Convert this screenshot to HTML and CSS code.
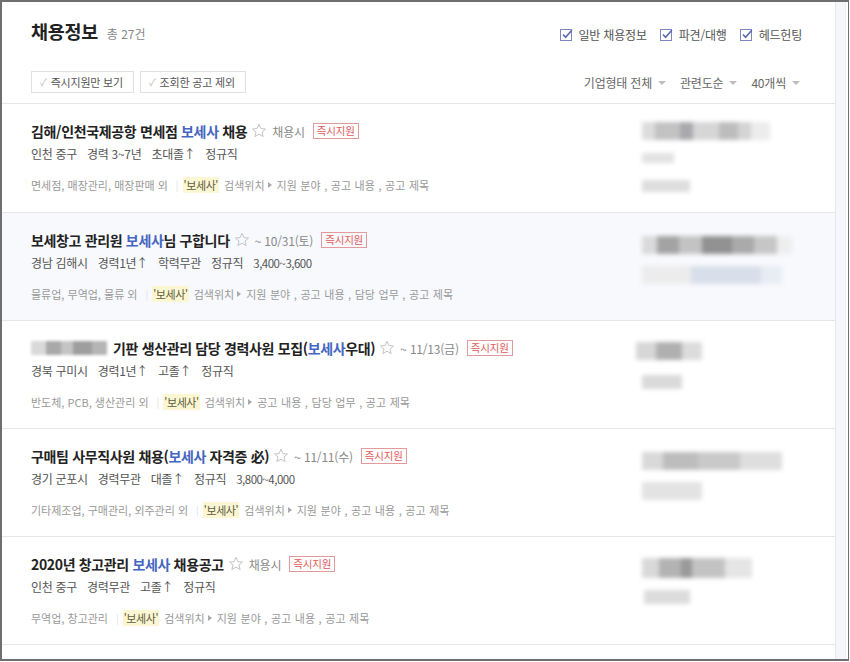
FILE: index.html
```html
<!DOCTYPE html>
<html lang="ko">
<head>
<meta charset="utf-8">
<title>채용정보</title>
<link rel="stylesheet" href="styles.css">
</head>
<body>
<div class="frame">
  <div class="main">
    <div class="head">
      <div class="head-top">
        <h1 class="h-title">채용정보 <span class="count">총 27건</span></h1>
        <div class="types">
          <label class="chk"><svg viewBox="0 0 13 13" width="13" height="13"><rect x="0.5" y="1.5" width="11" height="11" fill="#fff" stroke="#7d87bf"/><path d="M3 6.5 L5.6 9.2 L11.8 2.2" fill="none" stroke="#5a67ad" stroke-width="1.6"/></svg>일반 채용정보</label>
          <label class="chk"><svg viewBox="0 0 13 13" width="13" height="13"><rect x="0.5" y="1.5" width="11" height="11" fill="#fff" stroke="#7d87bf"/><path d="M3 6.5 L5.6 9.2 L11.8 2.2" fill="none" stroke="#5a67ad" stroke-width="1.6"/></svg>파견/대행</label>
          <label class="chk"><svg viewBox="0 0 13 13" width="13" height="13"><rect x="0.5" y="1.5" width="11" height="11" fill="#fff" stroke="#7d87bf"/><path d="M3 6.5 L5.6 9.2 L11.8 2.2" fill="none" stroke="#5a67ad" stroke-width="1.6"/></svg>헤드헌팅</label>
        </div>
      </div>
      <div class="head-filter">
        <div class="btns">
          <button class="fbtn"><span class="tick">✓</span>즉시지원만 보기</button>
          <button class="fbtn"><span class="tick">✓</span>조회한 공고 제외</button>
        </div>
        <div class="sorts">
          <span class="sort">기업형태 전체<i class="caret"></i></span>
          <span class="sort">관련도순<i class="caret"></i></span>
          <span class="sort">40개씩<i class="caret"></i></span>
        </div>
      </div>
    </div>

    <div class="list">
      <div class="row">
        <div class="info">
          <div class="title"><span class="t">김해/인천국제공항 면세점 <em>보세사</em> 채용</span><svg class="star" viewBox="0 0 16 16" width="16" height="16"><path d="M8 1.3 L9.9 5.6 L14.5 6 L11 9.1 L12.1 13.6 L8 11.2 L3.9 13.6 L5 9.1 L1.5 6 L6.1 5.6 Z" fill="none" stroke="#c4c4c4" stroke-width="1"/></svg><span class="due">채용시</span><span class="badge">즉시지원</span></div>
          <div class="meta"><span>인천 중구</span><span>경력 3~7년</span><span>초대졸↑</span><span>정규직</span></div>
          <div class="kw">면세점, 매장관리, 매장판매 외<span class="bar">|</span><span class="hl">'보세사'</span><span class="loc">검색위치</span><span class="tri"></span><span class="loc">지원 분야 , 공고 내용 , 공고 제목</span></div>
        </div>
        <div class="side">
          <div class="mz mz-name"></div>
          <div class="mz mz-s1"></div>
          <div class="mz mz-s2"></div>
        </div>
      </div>

      <div class="row row-on">
        <div class="info">
          <div class="title"><span class="t">보세창고 관리원 <em>보세사</em>님 구합니다</span><svg class="star" viewBox="0 0 16 16" width="16" height="16"><path d="M8 1.3 L9.9 5.6 L14.5 6 L11 9.1 L12.1 13.6 L8 11.2 L3.9 13.6 L5 9.1 L1.5 6 L6.1 5.6 Z" fill="none" stroke="#c4c4c4" stroke-width="1"/></svg><span class="due">~ 10/31(토)</span><span class="badge">즉시지원</span></div>
          <div class="meta"><span>경남 김해시</span><span>경력1년↑</span><span>학력무관</span><span>정규직</span><span class="pay">3,400~3,600</span></div>
          <div class="kw">물류업, 무역업, 물류 외<span class="bar">|</span><span class="hl">'보세사'</span><span class="loc">검색위치</span><span class="tri"></span><span class="loc">지원 분야 , 공고 내용 , 담당 업무 , 공고 제목</span></div>
        </div>
        <div class="side">
          <div class="mz mz-name2"></div>
          <div class="mz mz-blue"></div>
        </div>
      </div>

      <div class="row">
        <div class="info">
          <div class="title"><span class="mz mz-co"></span><span class="t">기판 생산관리 담당 경력사원 모집(<em>보세사</em>우대)</span><svg class="star" viewBox="0 0 16 16" width="16" height="16"><path d="M8 1.3 L9.9 5.6 L14.5 6 L11 9.1 L12.1 13.6 L8 11.2 L3.9 13.6 L5 9.1 L1.5 6 L6.1 5.6 Z" fill="none" stroke="#c4c4c4" stroke-width="1"/></svg><span class="due">~ 11/13(금)</span><span class="badge">즉시지원</span></div>
          <div class="meta"><span>경북 구미시</span><span>경력1년↑</span><span>고졸↑</span><span>정규직</span></div>
          <div class="kw">반도체, PCB, 생산관리 외<span class="bar">|</span><span class="hl">'보세사'</span><span class="loc">검색위치</span><span class="tri"></span><span class="loc">공고 내용 , 담당 업무 , 공고 제목</span></div>
        </div>
        <div class="side">
          <div class="mz mz-name3"></div>
          <div class="mz mz-s3"></div>
        </div>
      </div>

      <div class="row">
        <div class="info">
          <div class="title"><span class="t">구매팀 사무직사원 채용(<em>보세사</em> 자격증 必)</span><svg class="star" viewBox="0 0 16 16" width="16" height="16"><path d="M8 1.3 L9.9 5.6 L14.5 6 L11 9.1 L12.1 13.6 L8 11.2 L3.9 13.6 L5 9.1 L1.5 6 L6.1 5.6 Z" fill="none" stroke="#c4c4c4" stroke-width="1"/></svg><span class="due">~ 11/11(수)</span><span class="badge">즉시지원</span></div>
          <div class="meta"><span>경기 군포시</span><span>경력무관</span><span>대졸↑</span><span>정규직</span><span class="pay">3,800~4,000</span></div>
          <div class="kw">기타제조업, 구매관리, 외주관리 외<span class="bar">|</span><span class="hl">'보세사'</span><span class="loc">검색위치</span><span class="tri"></span><span class="loc">지원 분야 , 공고 내용 , 공고 제목</span></div>
        </div>
        <div class="side">
          <div class="mz mz-name4"></div>
          <div class="mz mz-s4"></div>
        </div>
      </div>

      <div class="row">
        <div class="info">
          <div class="title"><span class="t">2020년 창고관리 <em>보세사</em> 채용공고</span><svg class="star" viewBox="0 0 16 16" width="16" height="16"><path d="M8 1.3 L9.9 5.6 L14.5 6 L11 9.1 L12.1 13.6 L8 11.2 L3.9 13.6 L5 9.1 L1.5 6 L6.1 5.6 Z" fill="none" stroke="#c4c4c4" stroke-width="1"/></svg><span class="due">채용시</span><span class="badge">즉시지원</span></div>
          <div class="meta"><span>인천 중구</span><span>경력무관</span><span>고졸↑</span><span>정규직</span></div>
          <div class="kw">무역업, 창고관리<span class="bar">|</span><span class="hl">'보세사'</span><span class="loc">검색위치</span><span class="tri"></span><span class="loc">지원 분야 , 공고 내용 , 공고 제목</span></div>
        </div>
        <div class="side">
          <div class="mz mz-name5"></div>
          <div class="mz mz-s5"></div>
        </div>
      </div>
    </div>
  </div>
  <div class="strip"></div>
</div>
</body>
</html>
```

FILE: styles.css
```css
* { box-sizing: border-box; }
html, body { margin: 0; padding: 0; background: #fff; }
body {
  font-family: "Noto Sans CJK KR", "Noto Sans", sans-serif;
  color: #333;
  width: 850px;
  height: 662px;
  overflow: hidden;
}
.frame {
  width: 849px;
  height: 661px;
  border: 2px solid #6f6f6f;
  border-right-width: 1px;
  border-bottom-width: 2px;
  display: flex;
  padding-right: 2px;
  overflow: hidden;
  background: #fff;
}
.main { flex: 1; min-width: 0; }
.strip {
  width: 11px;
  background: #f6f7fb;
  border-left: 1px solid #e6e7ee;
  border-right: 1px solid #eceef4;
}

/* header */
.head {
  padding: 16px 33px 0 29px;
  border-bottom: 1px solid #e6e6e6;
  height: 102px;
}
.head-top {
  display: flex;
  justify-content: space-between;
  align-items: center;
  height: 28px;
}
.h-title {
  margin: 0;
  font-size: 18.5px;
  font-weight: 700;
  color: #222;
  letter-spacing: -0.3px;
  line-height: 28px;
}
.count {
  font-size: 12px;
  font-weight: 400;
  color: #888;
  margin-left: 4px;
  letter-spacing: 0;
}
.types { display: flex; gap: 13px; padding-top: 4px; }
.chk {
  display: flex;
  align-items: center;
  font-size: 12px;
  color: #555;
  letter-spacing: -0.2px;
}
.chk svg { margin-right: 6px; }

.head-filter {
  display: flex;
  justify-content: space-between;
  align-items: center;
  margin-top: 25px;
}
.btns { display: flex; gap: 6px; }
.fbtn {
  font-family: inherit;
  height: 22px;
  padding: 0 10px 0 8px;
  background: #fff;
  border: 1px solid #e0e0e0;
  font-size: 11px;
  color: #555;
  line-height: 20px;
  display: flex;
  align-items: center;
  letter-spacing: -0.2px;
}
.tick { color: #bbb; font-size: 10px; margin-right: 4px; }
.sorts { display: flex; gap: 14px; margin-right: 2px; }
.sort {
  font-size: 12px;
  color: #666;
  display: flex;
  align-items: center;
  letter-spacing: -0.2px;
}
.caret {
  width: 0; height: 0;
  border-left: 4px solid transparent;
  border-right: 4px solid transparent;
  border-top: 4px solid #bdbdbd;
  margin-left: 6px;
  margin-top: 1px;
}

/* list */
.row {
  display: flex;
  height: 108px;
  border-bottom: 1px solid #e6e6e6;
  padding: 17px 0 0 29px;
}
.row:first-child { height: 109px; }
.row-on { background: #f8f9fd; }
.info { flex: 1; min-width: 0; }
.title {
  display: flex;
  align-items: center;
  height: 20px;
  white-space: nowrap;
}
.t {
  font-size: 14px;
  font-weight: 700;
  color: #222;
  letter-spacing: -0.35px;
}
.t em { font-style: normal; color: #4466c0; }
.star { margin: 0 5px 0 4px; }
.due { font-size: 12px; color: #888; letter-spacing: -0.2px; }
.badge {
  margin-left: 8px;
  font-size: 10.5px;
  color: #e05a5a;
  border: 1px solid #e29b9b;
  padding: 0 3px;
  line-height: 14px;
  letter-spacing: -0.2px;
}
.meta {
  display: flex;
  margin-top: 4px;
  font-size: 12px;
  color: #555;
  line-height: 18px;
  letter-spacing: -0.3px;
}
.meta span { margin-right: 10px; }
.meta .pay { font-size: 11.5px; letter-spacing: -0.5px; }
.kw {
  margin-top: 14px;
  font-size: 11px;
  color: #999;
  line-height: 16px;
  white-space: nowrap;
  display: flex;
  align-items: center;
}
.loc { word-spacing: 0.5px; }
.bar { color: #e2e2e2; margin: 0 4px 0 8px; font-size: 10px; }
.hl { background: #fdf6d3; color: #5c5c3c; padding: 0 1px; margin-right: 5px; letter-spacing: -0.4px; }
.tri {
  width: 0; height: 0;
  border-top: 3px solid transparent;
  border-bottom: 3px solid transparent;
  border-left: 4px solid #aaa;
  margin: 0 5px 0 3px;
}

/* blurred (pixelated) company column */
.side {
  width: 172px;
  margin-right: 29px;
  position: relative;
}
.mz { display: block; filter: blur(2px); }
.mz-name {
  width: 128px; height: 18px; margin: 1px 0 0 8px;
  background: linear-gradient(90deg, #dcdcdc 0 10%, #c2c2c2 10% 30%, #a9a9ad 30% 40%, #d6d6d6 40% 60%, #bdbdbd 60% 75%, #d4d4d4 75% 85%, #ececec 85%);
}
.mz-s1 { width: 32px; height: 10px; margin: 13px 0 0 8px; background: #e2e2e2; }
.mz-s2 { width: 48px; height: 12px; margin: 17px 0 0 8px; background: #dedede; }
.mz-name2 {
  width: 150px; height: 18px; margin: 6px 0 0 8px;
  background: linear-gradient(90deg, #dadada 0 10%, #a3a3a3 10% 25%, #c3c3c3 25% 40%, #919191 40% 60%, #aaa 60% 75%, #c6c6c6 75% 90%, #eee 90%);
}
.mz-blue {
  width: 140px; height: 18px; margin: 12px 0 0 8px;
  background: linear-gradient(90deg, #ececec 0 35%, #d8dfea 35% 85%, #e8edf3 85%);
}
.mz-co {
  width: 76px; height: 14px; margin-right: 6px; filter: blur(1.5px);
  background: linear-gradient(90deg, #d9d9d9 0 20%, #a9a9a9 20% 40%, #c4c4c4 40% 55%, #9e9e9e 55% 80%, #b5b5b5 80%);
}
.mz-name3 {
  width: 66px; height: 18px; margin: 4px 0 0 2px;
  background: linear-gradient(90deg, #d7d7d7 0 30%, #b0b0b0 30% 70%, #dcdcdc 70%);
}
.mz-s3 { width: 40px; height: 14px; margin: 15px 0 0 8px; background: #dadada; }
.mz-name4 {
  width: 140px; height: 18px; margin: 6px 0 0 8px;
  background: linear-gradient(90deg, #d9d9d9 0 15%, #bdbdbd 15% 40%, #c9c9c9 40% 70%, #dedede 70%);
}
.mz-s4 { width: 60px; height: 18px; margin: 12px 0 0 8px; background: #e3e3e3; }
.mz-name5 {
  width: 110px; height: 20px; margin: 4px 0 0 8px;
  background: linear-gradient(90deg, #d9d9d9 0 15%, #b3b3b3 15% 35%, #9a9a9a 35% 45%, #c3c3c3 45% 75%, #e5e5e5 75%);
}
.mz-s5 { width: 46px; height: 14px; margin: 12px 0 0 10px; background: #dcdcdc; }
```
